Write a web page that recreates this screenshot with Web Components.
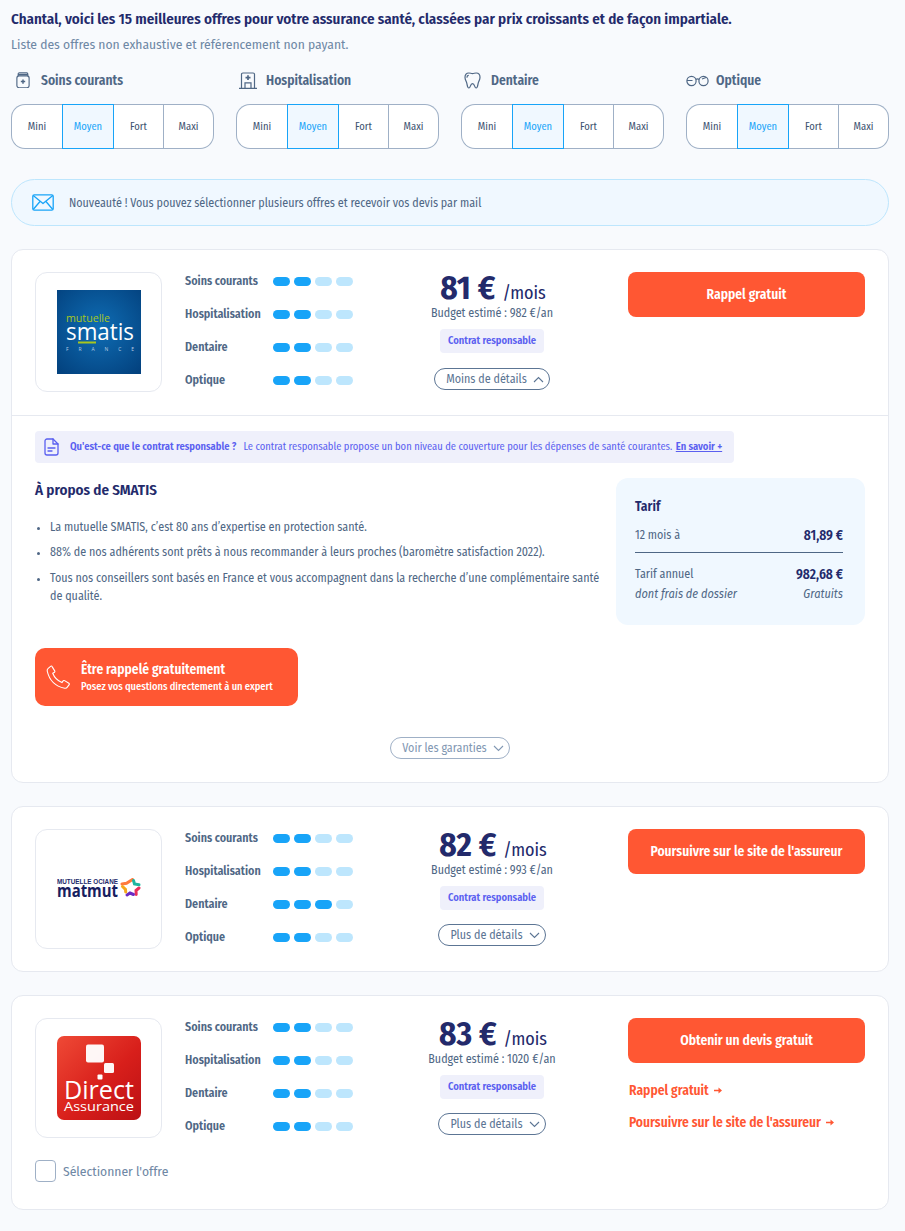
<!DOCTYPE html>
<html lang="fr">
<head>
<meta charset="utf-8">
<title>Offres assurance santé</title>
<style>
  :root {
    --navy: #232a6b;
    --slate: #4f6785;
    --pale: #6f88a5;
    --sky: #18a4f8;
    --orange: #ff5733;
  }
  html, body { margin: 0; background: #f8fafd; }
  body {
    padding: 11px 16px 21px 11px;
    font-family: "Fira Sans Condensed", "Roboto Condensed", Roboto, sans-serif;
    color: var(--slate);
  }
</style>
</head>
<body>
<results-page></results-page>

<script>
const ICONS = {
  soins: `<svg width="14" height="16.600" viewBox="0 0 16 19" fill="none" stroke="currentColor" stroke-width="1.300" stroke-linejoin="round"><rect x="1" y="4.500" width="14" height="13.500" rx="2.500"/><path d="M2.500 4.500V2.200C2.500 1.500 3 1 3.700 1h8.600c.7 0 1.200.5 1.200 1.200v2.300M2.500 3h11"/><path d="M8 8.500v5M5.500 11h5" stroke-width="1.700"/></svg>`,
  hospital: `<svg width="18" height="17" viewBox="0 0 18 18" preserveAspectRatio="none" fill="none" stroke="currentColor" stroke-width="1.200"><path d="M2.500 17V2.400C2.500 1.600 3.100 1 3.900 1h10.200c.8 0 1.400.6 1.400 1.400V17M0 17.300h18"/><path d="M9 3.500v5M6.500 6h5" stroke-width="1.700"/><path d="M6 17v-5.500h6V17"/></svg>`,
  tooth: `<svg width="17" height="17" viewBox="0 0 17 18" preserveAspectRatio="none" fill="none" stroke="currentColor" stroke-width="1.200" stroke-linecap="round" stroke-linejoin="round"><path d="M4.800 1c1.500 0 2.300.7 3.700.7s2.200-.7 3.700-.7C14.600 1 16 3 16 5.500c0 3-1.400 4.200-1.900 6.800-.3 1.800-.6 4.700-2 4.700-1.700 0-1.200-4.700-3.600-4.700S6.600 17 4.900 17c-1.400 0-1.700-2.900-2-4.700C2.400 9.700 1 8.500 1 5.500 1 3 2.400 1 4.800 1z"/><path d="M3 5.500c0-.9.500-1.700 1.300-1.900"/></svg>`,
  glasses: `<svg width="23" height="13" viewBox="0 0 23 13" fill="none" stroke="currentColor" stroke-width="1.200"><circle cx="5.500" cy="7" r="4.600"/><circle cx="17.500" cy="7" r="4.600"/><path d="M10 5.500c.9-.9 2.100-.9 3 0M1 6.500h5.500M16 5l4-1.500"/></svg>`,
  mail: `<svg width="22" height="17" viewBox="0 0 22 17" fill="none" stroke="#18a4f8" stroke-width="1.300" stroke-linejoin="round"><rect x=".8" y=".8" width="20.400" height="15.400" rx="1.500"/><path d="M1.200 1.500 11 9.500l9.800-8M1.200 15.500 8 7.500M20.800 15.500 14 7.500"/></svg>`,
  doc: `<svg width="15" height="18" viewBox="0 0 15 18" fill="none" stroke="#5a5ff0" stroke-width="1.300" stroke-linejoin="round" stroke-linecap="round"><path d="M9 1H3C1.900 1 1 1.900 1 3v12c0 1.100.9 2 2 2h9c1.100 0 2-.9 2-2V6L9 1z"/><path d="M9 1v5h5M4 10h7M4 13h4"/></svg>`,
  phone: `<svg width="25" height="25" viewBox="0 0 25 25" fill="none" stroke="#fff" stroke-width="1.100" stroke-linejoin="round"><path d="M2.200 3.300 4.600 1.300c.5-.4 1.200-.3 1.500.3l2.600 4.300c.3.500.2 1.100-.2 1.400L6.700 8.300c1.700 4.200 4.900 7.500 9.200 9.300l1.200-1.700c.3-.5 1-.6 1.500-.3l4.300 2.600c.5.300.6 1 .3 1.500l-1.900 2.500c-.6.8-1.600 1.200-2.600 1C9.500 21.300 3.200 15 1.200 6c-.2-1 .2-2 1-2.700z"/></svg>`,
  up: `<svg width="11" height="7" viewBox="0 0 11 7" fill="none" stroke="currentColor" stroke-width="1.100"><path d="M1 6l4.500-4.500L10 6"/></svg>`,
  down: `<svg width="11" height="7" viewBox="0 0 11 7" fill="none" stroke="currentColor" stroke-width="1.100"><path d="M1 1l4.500 4.500L10 1"/></svg>`,
  arrow: `<svg width="8" height="7" viewBox="0 0 8 7" fill="#ff5733"><path d="M0 2.800h4.500V.6L8 3.500 4.500 6.400V4.200H0z"/></svg>`
};

const LOGOS = {
  smatis: `<svg width="84" height="84" viewBox="0 0 84 84">
    <defs><radialGradient id="sm" cx=".5" cy=".45" r=".7"><stop offset="0" stop-color="#0f6db4"/><stop offset="1" stop-color="#03427f"/></radialGradient></defs>
    <rect width="84" height="84" fill="url(#sm)"/>
    <text x="9" y="32" font-family="Open Sans, sans-serif" font-size="10.500" fill="#a7c61e" textLength="44" lengthAdjust="spacingAndGlyphs">mutuelle</text>
    <text x="9" y="50" font-family="Open Sans, sans-serif" font-size="23" fill="#fff" textLength="68" lengthAdjust="spacingAndGlyphs">smatis</text>
    <rect x="21" y="51.500" width="18" height="2" fill="#a7c61e"/>
    <text x="9" y="61" font-family="Open Sans, sans-serif" font-size="5" fill="#b8cde3" textLength="68">FRANCE</text>
  </svg>`,
  matmut: `<svg width="84" height="22" viewBox="0 0 84 22">
    <text x="0" y="6" font-family="Liberation Sans, sans-serif" font-size="6.500" font-weight="700" fill="#232a6b" textLength="61" lengthAdjust="spacingAndGlyphs">MUTUELLE OCIANE</text>
    <text x="0" y="18.500" font-family="Open Sans, sans-serif" font-size="17" font-weight="700" fill="#17205f" textLength="61" lengthAdjust="spacingAndGlyphs">matmut</text>
    <g fill="none" stroke-width="3" stroke-linecap="round">
      <path d="M65 6l4.500-.8L75.500 1.500" stroke="#ff7a3d"/>
      <path d="M76.500 2.500l1 3.500 4.500.8" stroke="#1db6a0"/>
      <path d="M82 10l-3 2.500.2 4" stroke="#e8315b"/>
      <path d="M76.500 16.500l-3.500-1.500-3 2" stroke="#6b2bc4"/>
      <path d="M65.500 8.500l3 3 .2 2.500" stroke="#f5a81c"/>
    </g>
  </svg>`,
  direct: `<svg width="84" height="84" viewBox="0 0 84 84">
    <defs><linearGradient id="da" x1="0" y1="0" x2="1" y2="1"><stop offset="0" stop-color="#ef4a36"/><stop offset=".55" stop-color="#d81f1b"/><stop offset="1" stop-color="#bb1014"/></linearGradient></defs>
    <rect width="84" height="84" rx="7" fill="url(#da)"/>
    <rect x="29" y="8.500" width="18" height="18" rx="2" fill="#fff" opacity=".96"/>
    <rect x="47" y="27" width="10" height="10" rx="1.500" fill="#fff" opacity=".96"/>
    <rect x="40.500" y="38.500" width="5" height="5" rx="1" fill="#fff"/>
    <text x="7" y="63" font-family="Open Sans, sans-serif" font-size="25" font-weight="500" fill="#fff" textLength="70" lengthAdjust="spacingAndGlyphs">Direct</text>
    <text x="7" y="75" font-family="Open Sans, sans-serif" font-size="12.500" font-weight="500" fill="#fff" textLength="70" lengthAdjust="spacingAndGlyphs">Assurance</text>
  </svg>`
};

class LevelToggle extends HTMLElement {
  constructor() {
    super();
    this.attachShadow({ mode: "open" });
  }
  connectedCallback() {
    const cells = ["Mini", "Moyen", "Fort", "Maxi"]
      .map(l => `<span class="${l === "Moyen" ? "on" : ""}">${l}</span>`).join("");
    this.shadowRoot.innerHTML = `
    <style>
      :host {
        display: grid;
        grid-template-columns: 51px 52px 50px 50px;
        height: 45px;
        font-size: 10.500px;
        color: #3d5270;
      }
      span {
        display: flex;
        align-items: center;
        justify-content: center;
        background: #fff;
        border: 1px solid #9fb0c6;
        border-left: 0;
      }
      span:first-of-type { border-left: 1px solid #9fb0c6; border-right: 0; border-radius: 14px 0 0 14px; }
      span:last-child { border-radius: 0 14px 14px 0; }
      .on { background: #f0f8ff; color: var(--sky); border: 1px solid var(--sky); }
    </style>${cells}`;
  }
}
customElements.define("level-toggle", LevelToggle);

class CoverFilter extends HTMLElement {
  constructor() {
    super();
    this.attachShadow({ mode: "open" });
  }
  connectedCallback() {
    this.shadowRoot.innerHTML = `
    <style>
      :host { display: block; }
      .head {
        display: flex;
        align-items: center;
        gap: 7px;
        height: 20px;
        margin-bottom: 14px;
        font-size: 13.500px;
        font-weight: 600;
        color: var(--slate);
      }
      .ico { width: 23px; display: flex; justify-content: center; }
    </style>
    <div class="head"><span class="ico">${ICONS[this.getAttribute("icon")]}</span>${this.getAttribute("label")}</div>
    <level-toggle></level-toggle>`;
  }
}
customElements.define("cover-filter", CoverFilter);

class CriteriaRow extends HTMLElement {
  constructor() {
    super();
    this.attachShadow({ mode: "open" });
  }
  connectedCallback() {
    const level = Number(this.getAttribute("level"));
    const dots = [1, 2, 3, 4].map(i => `<i class="${i <= level ? "on" : ""}"></i>`).join("");
    this.shadowRoot.innerHTML = `
    <style>
      :host {
        display: flex;
        align-items: center;
        height: 20px;
        margin-bottom: 13px;
        font-size: 12px;
        color: var(--slate);
      }
      b { width: 88px; font-weight: 600; white-space: nowrap; }
      .dots { display: flex; gap: 4px; }
      i { width: 17px; height: 9px; border-radius: 5px; background: #bde6fd; }
      i.on { background: var(--sky); }
    </style>
    <b>${this.getAttribute("label")}</b><span class="dots">${dots}</span>`;
  }
}
customElements.define("criteria-row", CriteriaRow);

class PillButton extends HTMLElement {
  constructor() {
    super();
    this.attachShadow({ mode: "open" });
  }
  connectedCallback() {
    this.shadowRoot.innerHTML = `
    <style>
      :host {
        display: inline-flex;
        align-items: center;
        gap: 6px;
        box-sizing: border-box;
        height: 22px;
        padding: 0 5px 0 11px;
        background: #fff;
        border: 1px solid #5c7594;
        border-radius: 11px;
        font-size: 12px;
        color: #5c7594;
        white-space: nowrap;
      }
      :host([soft]) { border-color: #9fb0c6; color: #8298b3; }
    </style>
    <slot></slot>${ICONS[this.getAttribute("dir") || "down"]}`;
  }
}
customElements.define("pill-button", PillButton);

class OfferCard extends HTMLElement {
  constructor() {
    super();
    this.attachShadow({ mode: "open" });
  }
  connectedCallback() {
    const levels = (this.getAttribute("levels") || "2,2,2,2").split(",");
    const labels = ["Soins courants", "Hospitalisation", "Dentaire", "Optique"];
    const rows = labels.map((l, i) => `<criteria-row label="${l}" level="${levels[i]}"></criteria-row>`).join("");
    this.shadowRoot.innerHTML = `
    <style>
      :host {
        display: block;
        margin-bottom: 23px;
        background: #fff;
        border: 1px solid #e6e9f0;
        border-radius: 12px;
      }
      .top {
        display: grid;
        grid-template-columns: 150px 171px 1fr 237px;
        height: 120px;
        padding: 22px 23px;
      }
      .logo {
        width: 127px;
        height: 120px;
        box-sizing: border-box;
        display: flex;
        align-items: center;
        justify-content: center;
        border: 1px solid #e6e9f0;
        border-radius: 12px;
      }
      .crit { margin-top: -1px; }
      .price { display: flex; flex-direction: column; align-items: center; }
      .amount { display: flex; align-items: baseline; gap: 7px; color: var(--navy); height: 30px; margin: 1px 0 0 2px; }
      .amount b { font-size: 33px; line-height: 30px; font-weight: 700; }
      .amount span { font-size: 18px; }
      .budget { font-size: 12px; line-height: 16px; margin-top: 2px; white-space: nowrap; }
      .tag {
        margin: 8px 0 14px;
        height: 24px;
        padding: 0 8px 1px;
        box-sizing: border-box;
        display: flex;
        align-items: center;
        background: #eff0fb;
        border-radius: 4px;
        font-size: 10.500px;
        font-weight: 600;
        color: #5a5ff0;
        white-space: nowrap;
      }
      :host([open]) .tag { margin-bottom: 15px; }
      .cta {
        display: flex;
        align-items: center;
        justify-content: center;
        height: 45px;
        background: var(--orange);
        border-radius: 8px;
        font-size: 13.500px;
        font-weight: 600;
        color: #fff;
        white-space: nowrap;
      }
      .select {
        display: none;
        align-items: center;
        gap: 7px;
        padding: 0 23px 27px;
        font-size: 13.500px;
        color: var(--pale);
      }
      :host([selectable]) .select { display: flex; }
      .box { box-sizing: border-box; width: 21px; height: 22px; border: 1px solid #9fb0c6; border-radius: 4px; background: #fff; }
    </style>
    <div class="top">
      <div class="logo">${LOGOS[this.getAttribute("logo")]}</div>
      <div class="crit">${rows}</div>
      <div class="price">
        <div class="amount"><b>${this.getAttribute("price")} €</b><span>/mois</span></div>
        <div class="budget">Budget estimé : ${this.getAttribute("budget")} €/an</div>
        <div class="tag">Contrat responsable</div>
        <pill-button dir="${this.hasAttribute("open") ? "up" : "down"}">${this.hasAttribute("open") ? "Moins" : "Plus"} de détails</pill-button>
      </div>
      <div>
        <div class="cta">${this.getAttribute("cta")}</div>
        <slot name="links"></slot>
      </div>
    </div>
    <div class="select"><span class="box"></span>Sélectionner l'offre</div>
    <slot></slot>`;
  }
}
customElements.define("offer-card", OfferCard);

class OfferLinks extends HTMLElement {
  constructor() {
    super();
    this.attachShadow({ mode: "open" });
  }
  connectedCallback() {
    const items = ["Rappel gratuit", "Poursuivre sur le site de l'assureur"]
      .map(t => `<a>${t}${ICONS.arrow}</a>`).join("");
    this.shadowRoot.innerHTML = `
    <style>
      :host { display: flex; flex-direction: column; gap: 15px; padding: 19px 1px 0; }
      a {
        display: flex;
        align-items: center;
        gap: 5px;
        height: 17px;
        font-size: 13.500px;
        font-weight: 600;
        color: var(--orange);
        white-space: nowrap;
      }
    </style>${items}`;
  }
}
customElements.define("offer-links", OfferLinks);

class TariffBox extends HTMLElement {
  constructor() {
    super();
    this.attachShadow({ mode: "open" });
  }
  connectedCallback() {
    this.shadowRoot.innerHTML = `
    <style>
      :host {
        display: block;
        box-sizing: border-box;
        width: 249px;
        height: 147px;
        padding: 20px 22px 0 19px;
        background: #f0f8ff;
        border-radius: 12px;
        font-size: 12px;
        color: var(--slate);
      }
      h3 { margin: 0 0 11px; font-size: 13.500px; font-weight: 600; line-height: 17px; color: var(--navy); }
      .row { display: flex; justify-content: space-between; line-height: 19px; }
      .row + .row { margin-top: 1px; }
      .row b { color: var(--navy); font-size: 13.500px; font-weight: 600; }
      hr { border: 0; border-top: 1px solid #4f6785; margin: 7px 0 12px; }
      em { font-size: 12.200px; }
    </style>
    <h3>Tarif</h3>
    <div class="row"><span>12 mois à</span><b>81,89 €</b></div>
    <hr>
    <div class="row"><span>Tarif annuel</span><b>982,68 €</b></div>
    <div class="row"><em>dont frais de dossier</em><em>Gratuits</em></div>`;
  }
}
customElements.define("tariff-box", TariffBox);

class OfferDetails extends HTMLElement {
  constructor() {
    super();
    this.attachShadow({ mode: "open" });
  }
  connectedCallback() {
    this.shadowRoot.innerHTML = `
    <style>
      :host {
        display: block;
        margin-top: 1px;
        border-top: 1px solid #e6e9f0;
        padding: 15px 23px 23px;
      }
      .info {
        display: flex;
        align-items: center;
        width: 699px;
        height: 32px;
        box-sizing: border-box;
        padding: 0 0 1px 9px;
        background: #eff0fb;
        border-radius: 4px;
        font-size: 10.500px;
        color: #5a5ff0;
        white-space: pre;
      }
      .info svg { flex-shrink: 0; margin-right: 11px; }
      .info b { margin-right: 7px; font-weight: 600; }
      .info u { margin-left: 1px; font-weight: 600; }
      .main { display: flex; justify-content: space-between; margin-top: 15px; }
      h2 { margin: 3px 0 19px; font-size: 15px; font-weight: 600; line-height: 18px; color: var(--navy); }
      ul { margin: 0; padding: 0 0 0 15px; width: 552px; font-size: 12px; color: var(--slate); }
      li { line-height: 18px; margin-bottom: 7px; }
      li + li + li { margin-top: 8px; }
      li::marker { font-size: 11px; }
      .call {
        display: flex;
        align-items: center;
        gap: 10px;
        width: 263px;
        height: 58px;
        box-sizing: border-box;
        margin-top: 23px;
        padding-left: 11px;
        background: var(--orange);
        border-radius: 10px;
        color: #fff;
        white-space: nowrap;
      }
      .call b { display: block; font-size: 13.500px; font-weight: 600; line-height: 18px; }
      .call small { display: block; font-size: 10.400px; font-weight: 500; line-height: 15px; }
      .more { display: flex; justify-content: center; margin-top: 31px; }
    </style>
    <div class="info">${ICONS.doc}<b>Qu'est-ce que le contrat responsable ?</b>Le contrat responsable propose un bon niveau de couverture pour les dépenses de santé courantes. <u>En savoir +</u></div>
    <div class="main">
      <div>
        <h2>À propos de SMATIS</h2>
        <ul>
          <li>La mutuelle SMATIS, c’est 80 ans d’expertise en protection santé.</li>
          <li>88% de nos adhérents sont prêts à nous recommander à leurs proches (baromètre satisfaction 2022).</li>
          <li>Tous nos conseillers sont basés en France et vous accompagnent dans la recherche d’une complémentaire santé de qualité.</li>
        </ul>
      </div>
      <tariff-box></tariff-box>
    </div>
    <div class="call">${ICONS.phone}<span><b>Être rappelé gratuitement</b><small>Posez vos questions directement à un expert</small></span></div>
    <div class="more"><pill-button soft>Voir les garanties</pill-button></div>`;
  }
}
customElements.define("offer-details", OfferDetails);

class ResultsPage extends HTMLElement {
  constructor() {
    super();
    this.attachShadow({ mode: "open" });
  }
  connectedCallback() {
    this.shadowRoot.innerHTML = `
    <style>
      :host { display: block; }
      h1 { margin: 0; font-size: 15px; line-height: 16px; font-weight: 600; color: var(--navy); white-space: nowrap; }
      p { margin: 10px 0 0; font-size: 13.500px; line-height: 16px; color: var(--pale); }
      .filters { display: grid; grid-template-columns: repeat(4, 203px); column-gap: 22px; margin-top: 17px; }
      .news {
        display: flex;
        align-items: center;
        gap: 15px;
        height: 47px;
        box-sizing: border-box;
        margin: 30px 0 23px;
        padding-left: 20px;
        background: #f0f8ff;
        border: 1px solid #bde6fd;
        border-radius: 24px;
        font-size: 12px;
      }
    </style>
    <h1>Chantal, voici les 15 meilleures offres pour votre assurance santé, classées par prix croissants et de façon impartiale.</h1>
    <p>Liste des offres non exhaustive et référencement non payant.</p>
    <div class="filters">
      <cover-filter icon="soins" label="Soins courants"></cover-filter>
      <cover-filter icon="hospital" label="Hospitalisation"></cover-filter>
      <cover-filter icon="tooth" label="Dentaire"></cover-filter>
      <cover-filter icon="glasses" label="Optique"></cover-filter>
    </div>
    <div class="news">${ICONS.mail}Nouveauté ! Vous pouvez sélectionner plusieurs offres et recevoir vos devis par mail</div>
    <offer-card logo="smatis" price="81" budget="982" cta="Rappel gratuit" open><offer-details></offer-details></offer-card>
    <offer-card logo="matmut" price="82" budget="993" levels="2,2,3,2" cta="Poursuivre sur le site de l'assureur"></offer-card>
    <offer-card logo="direct" price="83" budget="1020" cta="Obtenir un devis gratuit" selectable><offer-links slot="links"></offer-links></offer-card>`;
  }
}
customElements.define("results-page", ResultsPage);
</script>
</body>
</html>
